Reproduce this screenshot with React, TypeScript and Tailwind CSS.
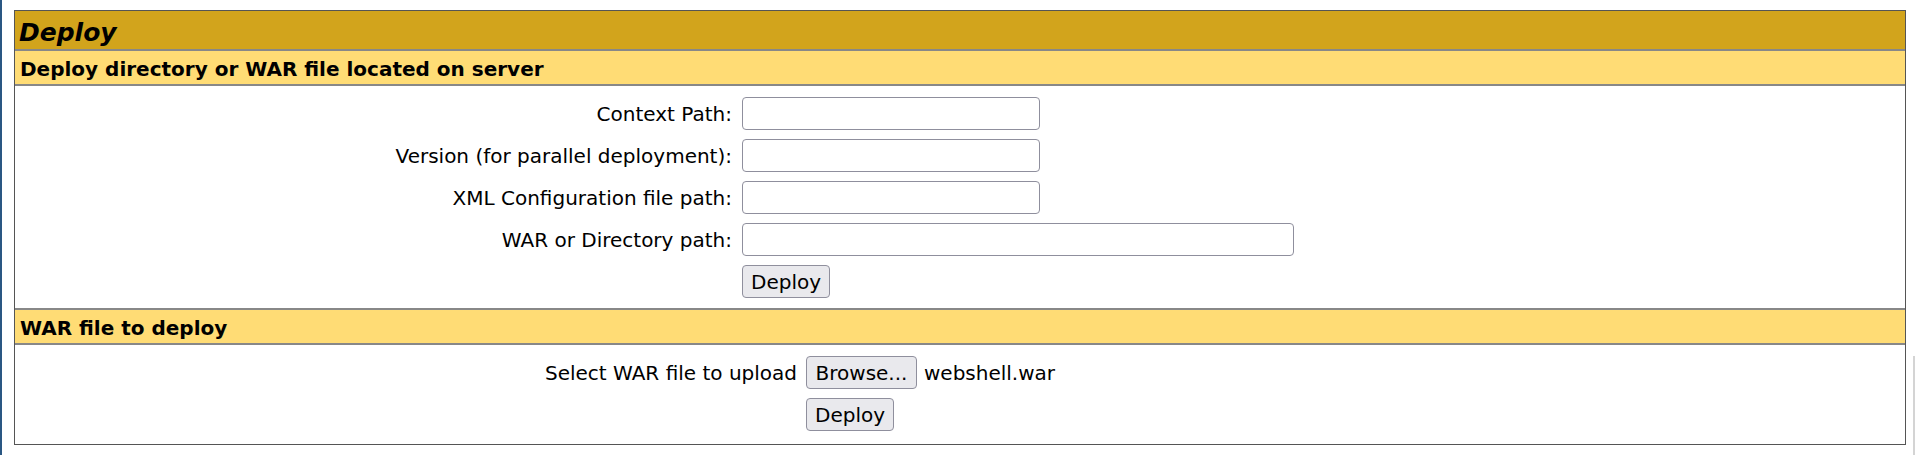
import React from "react";

const font = { fontFamily: '"DejaVu Sans", sans-serif' };

function TextInput({ wide = false }: { wide?: boolean }) {
  return (
    <input
      type="text"
      className={
        "h-[33px] rounded-[4px] border border-[#8f8f9d] bg-white px-1 " +
        (wide ? "w-[552px]" : "w-[298px]")
      }
    />
  );
}

function Btn({ children, w }: { children: React.ReactNode; w: string }) {
  return (
    <button
      className={
        "h-[33px] rounded-[4px] border border-[#8f8f9d] bg-[#e9e9ed] text-[20px] text-black " +
        w
      }
    >
      {children}
    </button>
  );
}

function FieldRow({ label, children }: { label: string; children: React.ReactNode }) {
  return (
    <div className="flex items-center">
      <div className="w-[717px] text-right">{label}</div>
      <div className="ml-[10px]">{children}</div>
    </div>
  );
}

export default function App() {
  return (
    <div className="relative min-h-[455px] bg-white text-black" style={font}>
      {/* left edge strip */}
      <div className="absolute left-0 top-0 h-[455px] w-[2px] bg-[#2a5783]" />
      <div className="absolute right-[1px] top-[356px] h-[99px] w-[2px] bg-[#d4d4d4]" />

      <div className="pl-[14px] pt-[10px]">
        <div className="w-[1892px] border border-[#555]">
          {/* title */}
          <div className="flex h-[40px] items-center border-b-2 border-[#888] bg-[#d2a41c] px-[4px] pt-[5px] text-[25px] font-bold italic">
            Deploy
          </div>

          {/* section 1 */}
          <div className="flex h-[35px] items-center border-b-2 border-[#888] bg-[#ffdc75] px-[5px] pt-[2px] text-[20px] font-bold">
            Deploy directory or WAR file located on server
          </div>
          <div className="flex flex-col gap-[9px] border-b-2 border-[#888] pt-[11px] pb-[10px] text-[20px]">
            <FieldRow label="Context Path:">
              <TextInput />
            </FieldRow>
            <FieldRow label="Version (for parallel deployment):">
              <TextInput />
            </FieldRow>
            <FieldRow label="XML Configuration file path:">
              <TextInput />
            </FieldRow>
            <FieldRow label="WAR or Directory path:">
              <TextInput wide />
            </FieldRow>
            <FieldRow label="">
              <Btn w="w-[88px]">Deploy</Btn>
            </FieldRow>
          </div>

          {/* section 2 */}
          <div className="flex h-[35px] items-center border-b-2 border-[#888] bg-[#ffdc75] px-[5px] pt-[2px] text-[20px] font-bold">
            WAR file to deploy
          </div>
          <div className="flex flex-col gap-[9px] pt-[11px] pb-[13px] text-[20px]">
            <div className="flex items-center">
              <div className="w-[782px] text-right">Select WAR file to upload</div>
              <div className="ml-[9px] flex items-center gap-[7px]">
                <Btn w="w-[111px]">Browse...</Btn>
                <span>webshell.war</span>
              </div>
            </div>
            <div className="flex items-center">
              <div className="w-[782px]" />
              <div className="ml-[9px]">
                <Btn w="w-[88px]">Deploy</Btn>
              </div>
            </div>
          </div>
        </div>
      </div>
    </div>
  );
}
